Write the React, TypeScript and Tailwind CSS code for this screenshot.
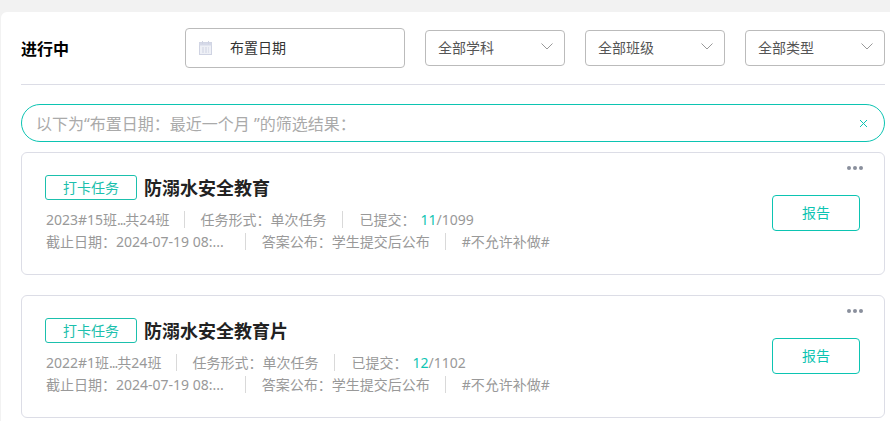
function Calendar() {
  return (
    <svg width="14" height="14" viewBox="0 0 14 14" fill="none" className="shrink-0">
      <rect x="0.5" y="1.5" width="12" height="12" fill="#eef0f6" stroke="#cfd3e2" />
      <rect x="0.5" y="1.5" width="12" height="3" fill="#d5d9e8" />
      <path d="M3.5 0v3M9.5 0v3" stroke="#cfd3e2" />
      <path d="M3 7h7M3 9h7M3 11h7" stroke="#cfd3e2" strokeDasharray="2 1" />
    </svg>
  );
}

function Select({ label }: { label: string }) {
  return (
    <div className="flex h-9 w-[140px] items-center justify-between rounded border border-[#bbbbbb] pl-3 pr-[11px] text-sm text-[#555555]">
      <span>{label}</span>
      <svg width="12" height="7" viewBox="0 0 12 7" fill="none" className="mb-[3px]">
        <path d="M0.5 0.5L6 6L11.5 0.5" stroke="#999999" />
      </svg>
    </div>
  );
}

function Sep() {
  return <span className="mx-[15px] h-[17px] w-px bg-[#d9d9d9]" />;
}

function Card({
  title,
  year,
  done,
  total,
  className,
}: {
  title: string;
  year: string;
  done: string;
  total: string;
  className: string;
}) {
  return (
    <div className={`relative flex h-[123px] items-start justify-between rounded-md border border-[#dcdde6] pl-[23px] pr-6 pt-[22px] ${className}`}>
      <div className="flex flex-col">
        <div className="flex h-[25px] items-center">
          <span className="flex h-[25px] w-[92px] items-center justify-center rounded-[3px] border border-[#1bc0ad] text-sm text-[#1bc0ad]">
            打卡任务
          </span>
          <span className="ml-[7px] mt-px text-lg font-bold text-[#222222]">{title}</span>
        </div>
        <div className="mt-2 flex h-[23px] items-center pl-px text-sm text-[#999999]">
          <span>
            {year}班<span className="tracking-[-1px]">...</span>共24班
          </span>
          <Sep />
          <span>任务形式：单次任务</span>
          <span className="mx-4 h-[17px] w-px bg-[#d9d9d9]" />
          <span>已提交：</span>
          <span className="ml-[5px] text-[#0fc5b3]">{done}</span>
          <span>/{total}</span>
        </div>
        <div className="-mt-px flex h-[23px] items-center pl-px text-sm text-[#999999]">
          <span>截止日期：2024-07-19 08:...</span>
          <span className="ml-[21px] mr-[16px] h-[17px] w-px bg-[#d9d9d9]" />
          <span>答案公布：学生提交后公布</span>
          <span className="ml-[15px] mr-4 h-[17px] w-px bg-[#d9d9d9]" />
          <span>#不允许补做#</span>
        </div>
      </div>
      <button className="mt-5 flex h-9 w-[88px] items-center justify-center rounded border border-[#0cc4b2] text-sm text-[#0cc4b2]">
        报告
      </button>
      <div className="absolute right-[21px] top-[13px] flex gap-[2px]">
        <span className="size-1 rounded-full bg-[#8a8f9c]" />
        <span className="size-1 rounded-full bg-[#8a8f9c]" />
        <span className="size-1 rounded-full bg-[#8a8f9c]" />
      </div>
    </div>
  );
}

export default function App() {
  return (
    <div
      className="h-[421px] overflow-hidden bg-[#f2f2f2] pl-px pt-3"
      style={{ fontFamily: '"Noto Sans", "Noto Sans CJK SC", sans-serif' }}
    >
      <div className="h-full rounded-tl-md bg-white pl-5 pr-[5px]">
        <div className="flex h-[73px] items-center justify-between border-b border-[#dcdde6]">
          <span className="mt-px w-[164px] text-base font-bold text-black">进行中</span>
          <div className="flex h-10 w-[220px] items-center rounded border border-[#bbbbbb] pl-[13px] text-sm text-[#333333]">
            <Calendar />
            <span className="ml-[17px]">布置日期</span>
          </div>
          <div className="ml-5"><Select label="全部学科" /></div>
          <div className="ml-5"><Select label="全部班级" /></div>
          <div className="ml-5"><Select label="全部类型" /></div>
        </div>
        <div className="mt-[19px] flex h-[38px] items-center justify-between rounded-[19px] border border-[#0cc4b2] pl-[14px] pr-4 text-base text-[#aaaaaa]">
          <span className="pt-px">以下为“布置日期：最近一个月 ”的筛选结果：</span>
          <svg width="9" height="9" viewBox="0 0 9 9" className="text-[#0cc4b2]">
            <path d="M1 1l7 7M8 1L1 8" stroke="currentColor" strokeWidth="1" />
          </svg>
        </div>
        <Card title="防溺水安全教育" year="2023#15" done="11" total="1099" className="mt-[10px]" />
        <Card title="防溺水安全教育片" year="2022#1" done="12" total="1102" className="mt-5" />
      </div>
    </div>
  );
}
